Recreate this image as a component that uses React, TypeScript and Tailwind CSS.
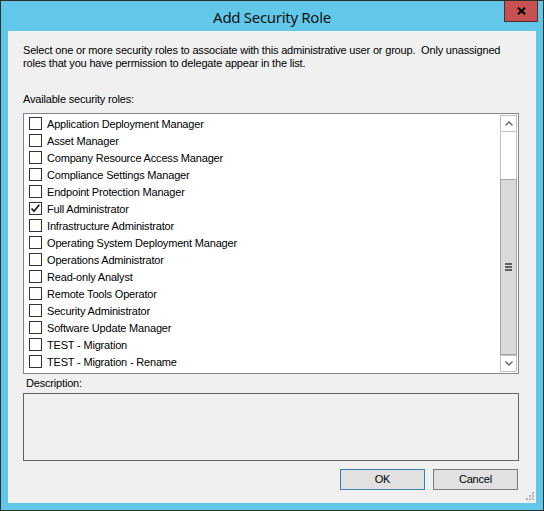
import React from "react";

const roles: { name: string; checked?: boolean }[] = [
  { name: "Application Deployment Manager" },
  { name: "Asset Manager" },
  { name: "Company Resource Access Manager" },
  { name: "Compliance Settings Manager" },
  { name: "Endpoint Protection Manager" },
  { name: "Full Administrator", checked: true },
  { name: "Infrastructure Administrator" },
  { name: "Operating System Deployment Manager" },
  { name: "Operations Administrator" },
  { name: "Read-only Analyst" },
  { name: "Remote Tools Operator" },
  { name: "Security Administrator" },
  { name: "Software Update Manager" },
  { name: "TEST - Migration" },
  { name: "TEST - Migration - Rename" },
];

function Checkbox({ checked }: { checked?: boolean }) {
  return (
    <div className="w-[13px] h-[13px] border border-[#333333] bg-white flex items-center justify-center shrink-0">
      {checked && (
        <svg width="11" height="11" viewBox="0 0 11 11">
          <path d="M1.5 5.5 L4 8.2 L9.3 1.8" fill="none" stroke="#1e1e1e" strokeWidth="1.7" />
        </svg>
      )}
    </div>
  );
}

export default function App() {
  return (
    <div className="w-[544px] h-[511px] bg-[#62c8ea] border border-[#2f2f2f] flex flex-col font-['Liberation_Sans',Arial,sans-serif] text-black">
      {/* Title bar */}
      <div className="h-[30px] grid grid-cols-[1fr_auto_1fr] shrink-0">
        <div />
        <div className="font-['Noto_Sans',sans-serif] text-[15px] tracking-[-0.3px] leading-[30px] text-[#111111] pt-px">
          Add Security Role
        </div>
        <div className="flex justify-end items-start pr-[5px]">
          <div className="w-[34px] h-[21px] bg-[#c75050] border-x border-b border-[#4a3030] flex items-center justify-center">
            <svg width="9" height="8" viewBox="0 0 9 8">
              <path d="M1 0.8 L8 7.2 M8 0.8 L1 7.2" stroke="#000" strokeWidth="2.2" />
            </svg>
          </div>
        </div>
      </div>

      {/* Body */}
      <div className="flex-1 px-[7px] pb-[7px] flex">
        <div className="relative flex-1 bg-[#f0f0f0] pl-[15px] pr-[17px] pt-[13px] flex flex-col text-[11px] leading-[13px] tracking-[-0.18px]">
          <div>
            <div className="whitespace-pre">
              Select one or more security roles to associate with this administrative user or group.  Only unassigned
            </div>
            <div>roles that you have permission to delegate appear in the list.</div>
          </div>

          <div className="mt-[23px]">Available security roles:</div>

          <div className="mt-[7px] h-[261px] border border-[#828790] bg-white p-px flex">
            <div className="flex-1 flex flex-col">
              {roles.map((r) => (
                <div key={r.name} className="h-[17px] flex items-center pl-[4px]">
                  <Checkbox checked={r.checked} />
                  <span className="ml-[5px] leading-[17px] pt-px whitespace-nowrap">{r.name}</span>
                </div>
              ))}
            </div>
            {/* Scrollbar */}
            <div className="w-[17px] flex flex-col">
              <div className="h-[17px] border border-[#c2c2c2] bg-white flex items-center justify-center">
                <svg width="8" height="5" viewBox="0 0 8 5">
                  <polyline points="0.5,4.5 4,1 7.5,4.5" fill="none" stroke="#606060" strokeWidth="1.3" />
                </svg>
              </div>
              <div className="h-[47px] border-x border-[#c2c2c2] bg-white" />
              <div className="flex-1 bg-[#dadada] border border-[#a6a6a6] flex items-center justify-center">
                <div className="flex flex-col gap-px">
                  <div className="w-[7px] h-[2px] bg-[#606060]" />
                  <div className="w-[7px] h-[2px] bg-[#606060]" />
                  <div className="w-[7px] h-[2px] bg-[#606060]" />
                </div>
              </div>
              <div className="h-[17px] border border-[#c2c2c2] bg-white flex items-center justify-center">
                <svg width="8" height="5" viewBox="0 0 8 5">
                  <polyline points="0.5,0.5 4,4 7.5,0.5" fill="none" stroke="#606060" strokeWidth="1.3" />
                </svg>
              </div>
            </div>
          </div>

          <div className="mt-[3px] pl-[3px]">Description:</div>
          <div className="mt-[3px] h-[68px] border border-[#646464] bg-[#f0f0f0]" />

          <div className="mt-[8px] flex justify-end gap-[8px] pr-px">
            <button className="w-[85px] h-[21px] bg-[#e1e1e1] border border-[#3c7fb1] text-[11px] leading-[19px] text-black">
              OK
            </button>
            <button className="w-[85px] h-[21px] bg-[#e1e1e1] border border-[#7a7a7a] text-[11px] leading-[19px] text-black">
              Cancel
            </button>
          </div>

          <svg className="absolute right-[1px] bottom-[2px]" width="9" height="9" viewBox="0 0 9 9">
            <rect x="6" y="0" width="2" height="2" fill="#b4b4b4" />
            <rect x="3" y="3" width="2" height="2" fill="#b4b4b4" />
            <rect x="6" y="3" width="2" height="2" fill="#b4b4b4" />
            <rect x="0" y="6" width="2" height="2" fill="#b4b4b4" />
            <rect x="3" y="6" width="2" height="2" fill="#b4b4b4" />
            <rect x="6" y="6" width="2" height="2" fill="#b4b4b4" />
          </svg>
        </div>
      </div>
    </div>
  );
}
